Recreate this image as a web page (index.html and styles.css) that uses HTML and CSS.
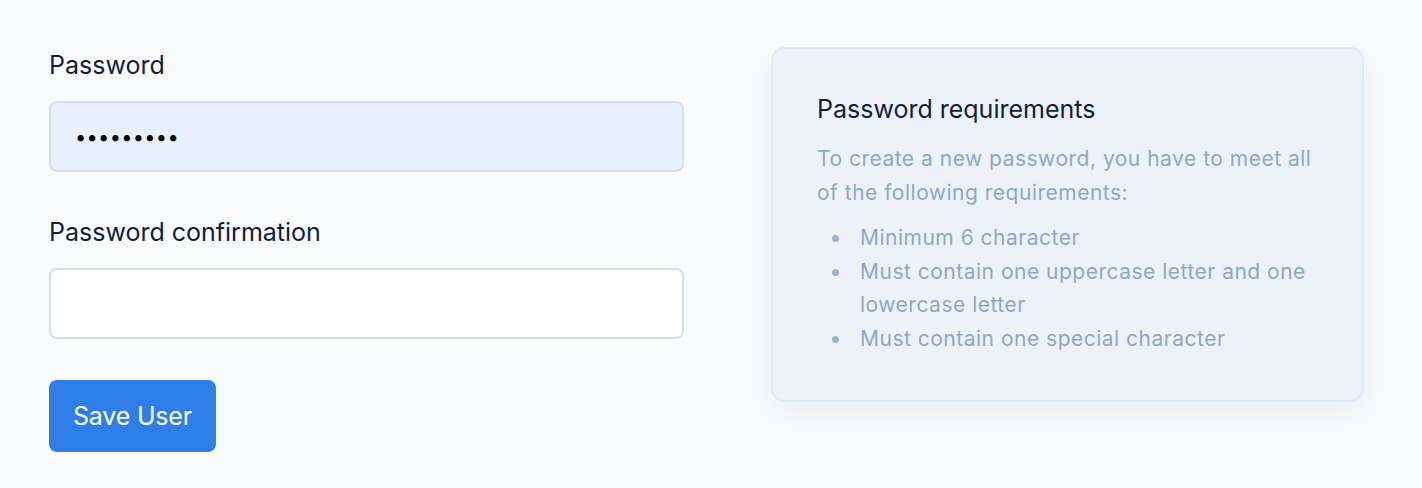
FILE: index.html
```html
<!DOCTYPE html>
<html lang="en">
<head>
    <meta charset="UTF-8">
    <meta name="viewport" content="width=device-width, initial-scale=1.0">
    <title>Edit User Password</title>
    <link rel="stylesheet" href="styles.css">
</head>
<body>
    <div class="layout">
        <form class="user-form" onsubmit="return false">
            <div class="field">
                <label for="password">Password</label>
                <input type="password" id="password" class="input autofilled" value="secret123">
            </div>

            <div class="field">
                <label for="passwordConfirmation">Password confirmation</label>
                <input type="password" id="passwordConfirmation" class="input">
            </div>

            <button type="submit" class="btn-primary">Save User</button>
        </form>

        <div class="requirements">
            <h3>Password requirements</h3>
            <p>To create a new password, you have to meet all of the following requirements:</p>
            <ul>
                <li>Minimum 6 character</li>
                <li>Must contain one uppercase letter and one lowercase letter</li>
                <li>Must contain one special character</li>
            </ul>
        </div>
    </div>
</body>
</html>
```

FILE: styles.css
```css
body {
    margin: 0;
    font-family: Inter, "Open Sans", sans-serif;
    background-color: #f8fafc;
    color: #0f1f3d;
}
.layout {
    display: grid;
    grid-template-columns: 635px 593px;
    column-gap: 87px;
    align-items: start;
    padding: 47px 0 0 49px;
}
.field {
    margin-bottom: 42px;
}
.field label {
    display: block;
    font-size: 25px;
    line-height: 36px;
    margin-bottom: 18px;
}
.input {
    display: block;
    box-sizing: border-box;
    width: 100%;
    height: 71px;
    padding: 0 24px;
    border: 2px solid #d5dfec;
    border-radius: 8px;
    background-color: #fff;
    font-size: 20px;
    font-family: inherit;
    color: #000;
    outline: none;
}
.input.autofilled {
    background-color: #e8f0fe;
    letter-spacing: 0.3px;
}
.btn-primary {
    margin-top: -1px;
    height: 72px;
    padding: 0 24px;
    border: none;
    border-radius: 8px;
    background-color: #2f7de8;
    color: #fff;
    font-family: inherit;
    font-size: 25px;
    letter-spacing: -0.2px;
    cursor: pointer;
}
.btn-primary:hover {
    background-color: #2570d8;
}
.requirements {
    box-sizing: border-box;
    padding: 43px 44px 46px;
    height: 355px;
    background-color: #edf2f9;
    border: 2px solid #e2eaf5;
    border-radius: 14px;
    box-shadow: 0 10px 30px rgba(15, 31, 61, 0.05);
}
.requirements h3 {
    margin: 0 0 16px;
    font-size: 25px;
    font-weight: normal;
    line-height: 34px;
}
.requirements p {
    margin: 0 0 11px;
    font-size: 21px;
    line-height: 34px;
    letter-spacing: 0.5px;
    color: #91a6ca;
}
.requirements ul {
    margin: 0;
    padding: 0 0 0 15px;
    list-style: none;
    font-size: 21px;
    line-height: 33.5px;
    letter-spacing: 0.5px;
    color: #91a6ca;
}
.requirements li {
    display: flex;
}
.requirements li::before {
    content: "";
    flex: none;
    width: 7px;
    height: 7px;
    margin: 14px 21px 0 0;
    border-radius: 50%;
    background-color: #9fb2d2;
}
```
